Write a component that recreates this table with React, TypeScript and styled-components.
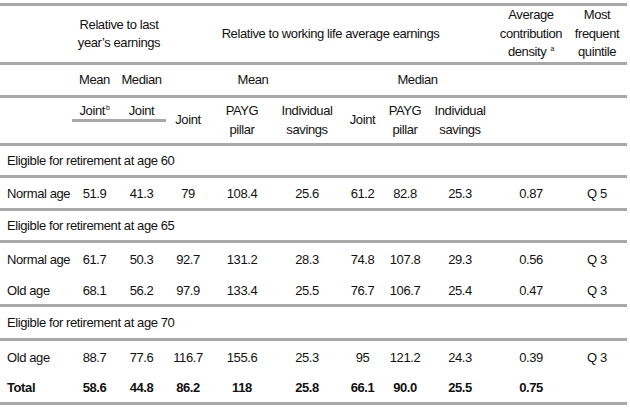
import styled, { createGlobalStyle } from "styled-components";

const GlobalStyle = createGlobalStyle`
  html, body {
    margin: 0;
    padding: 0;
    background: #fff;
  }
  body {
    font-family: "Liberation Sans", Arial, sans-serif;
    font-size: 13px;
    letter-spacing: -0.4px;
    color: #111;
  }
`;

const RULE = "#a8a8a8";
const COLUMNS = "72px 45px 49px 44px 64px 66px 45px 40px 70px 72px 60px";

const Page = styled.div`
  padding-top: 3px;
  width: 630px;
`;

const Table = styled.div`
  display: flex;
  flex-direction: column;
  width: 627px;
  border-top: 3px solid ${RULE};
  border-bottom: 3px solid ${RULE};
`;

const Row = styled.div<{ $h: number; $rule?: boolean; $bold?: boolean }>`
  display: grid;
  grid-template-columns: ${COLUMNS};
  height: ${(p) => p.$h}px;
  border-bottom: ${(p) => (p.$rule ? `3px solid ${RULE}` : "none")};
  font-weight: ${(p) => (p.$bold ? 700 : 400)};
  align-items: center;
`;

const SectionRow = styled.div<{ $h: number }>`
  display: flex;
  align-items: center;
  height: ${(p) => p.$h}px;
  padding-left: 7px;
  border-bottom: 3px solid ${RULE};
`;

const HeadCell = styled.div<{ $span?: string }>`
  grid-column: ${(p) => p.$span ?? "auto"};
  text-align: center;
  line-height: 18.5px;
  white-space: nowrap;
`;

const Underlined = styled.div`
  grid-column: 2 / 4;
  align-self: start;
  display: grid;
  grid-template-columns: 45px 49px;
  align-items: center;
  height: 18px;
  padding-top: 3px;
  border-bottom: 3px solid ${RULE};
  text-align: center;
`;

const Label = styled.div`
  padding-left: 7px;
  white-space: nowrap;
`;

const Value = styled.div`
  text-align: center;
`;

const Note = styled.sup`
  font-size: 7px;
  font-weight: 400;
  vertical-align: 5px;
  line-height: 0;
  margin-left: 1px;
`;

type DataLine = { label: string; values: string[]; bold?: boolean; rule?: boolean; h: number };

const groups: { title: string; h: number; rows: DataLine[] }[] = [
  {
    title: "Eligible for retirement at age 60",
    h: 29,
    rows: [
      { label: "Normal age", values: ["51.9", "41.3", "79", "108.4", "25.6", "61.2", "82.8", "25.3", "0.87", "Q 5"], rule: true, h: 30 },
    ],
  },
  {
    title: "Eligible for retirement at age 65",
    h: 29,
    rows: [
      { label: "Normal age", values: ["61.7", "50.3", "92.7", "131.2", "28.3", "74.8", "107.8", "29.3", "0.56", "Q 3"], h: 33 },
      { label: "Old age", values: ["68.1", "56.2", "97.9", "133.4", "25.5", "76.7", "106.7", "25.4", "0.47", "Q 3"], rule: true, h: 28 },
    ],
  },
  {
    title: "Eligible for retirement at age 70",
    h: 31,
    rows: [
      { label: "Old age", values: ["88.7", "77.6", "116.7", "155.6", "25.3", "95", "121.2", "24.3", "0.39", "Q 3"], h: 32 },
      { label: "Total", values: ["58.6", "44.8", "86.2", "118", "25.8", "66.1", "90.0", "25.5", "0.75", ""], bold: true, h: 29 },
    ],
  },
];

export default function App() {
  return (
    <Page>
      <GlobalStyle />
      <Table>
        <Row $h={56} $rule>
          <div />
          <HeadCell $span="2 / 4">
            Relative to last
            <br />
            year’s earnings
          </HeadCell>
          <HeadCell $span="4 / 10">Relative to working life average earnings</HeadCell>
          <HeadCell $span="10 / 11">
            Average
            <br />
            contribution
            <br />
            density <Note>a</Note>
          </HeadCell>
          <HeadCell $span="11 / 12">
            Most
            <br />
            frequent
            <br />
            quintile
          </HeadCell>
        </Row>
        <Row $h={30} $rule>
          <div />
          <HeadCell>Mean</HeadCell>
          <HeadCell>Median</HeadCell>
          <HeadCell $span="4 / 7">Mean</HeadCell>
          <HeadCell $span="7 / 10">Median</HeadCell>
        </Row>
        <Row $h={45} $rule>
          <div />
          <Underlined>
            <span>
              Joint<Note>b</Note>
            </span>
            <span>Joint</span>
          </Underlined>
          <HeadCell>Joint</HeadCell>
          <HeadCell>
            PAYG
            <br />
            pillar
          </HeadCell>
          <HeadCell>
            Individual
            <br />
            savings
          </HeadCell>
          <HeadCell>Joint</HeadCell>
          <HeadCell>
            PAYG
            <br />
            pillar
          </HeadCell>
          <HeadCell>
            Individual
            <br />
            savings
          </HeadCell>
        </Row>
        {groups.map((g) => (
          <div key={g.title}>
            <SectionRow $h={g.h}>{g.title}</SectionRow>
            {g.rows.map((r) => (
              <Row key={r.label + r.values[0]} $h={r.h} $rule={r.rule} $bold={r.bold}>
                <Label>{r.label}</Label>
                {r.values.map((v, i) => (
                  <Value key={i}>{v}</Value>
                ))}
              </Row>
            ))}
          </div>
        ))}
      </Table>
    </Page>
  );
}
